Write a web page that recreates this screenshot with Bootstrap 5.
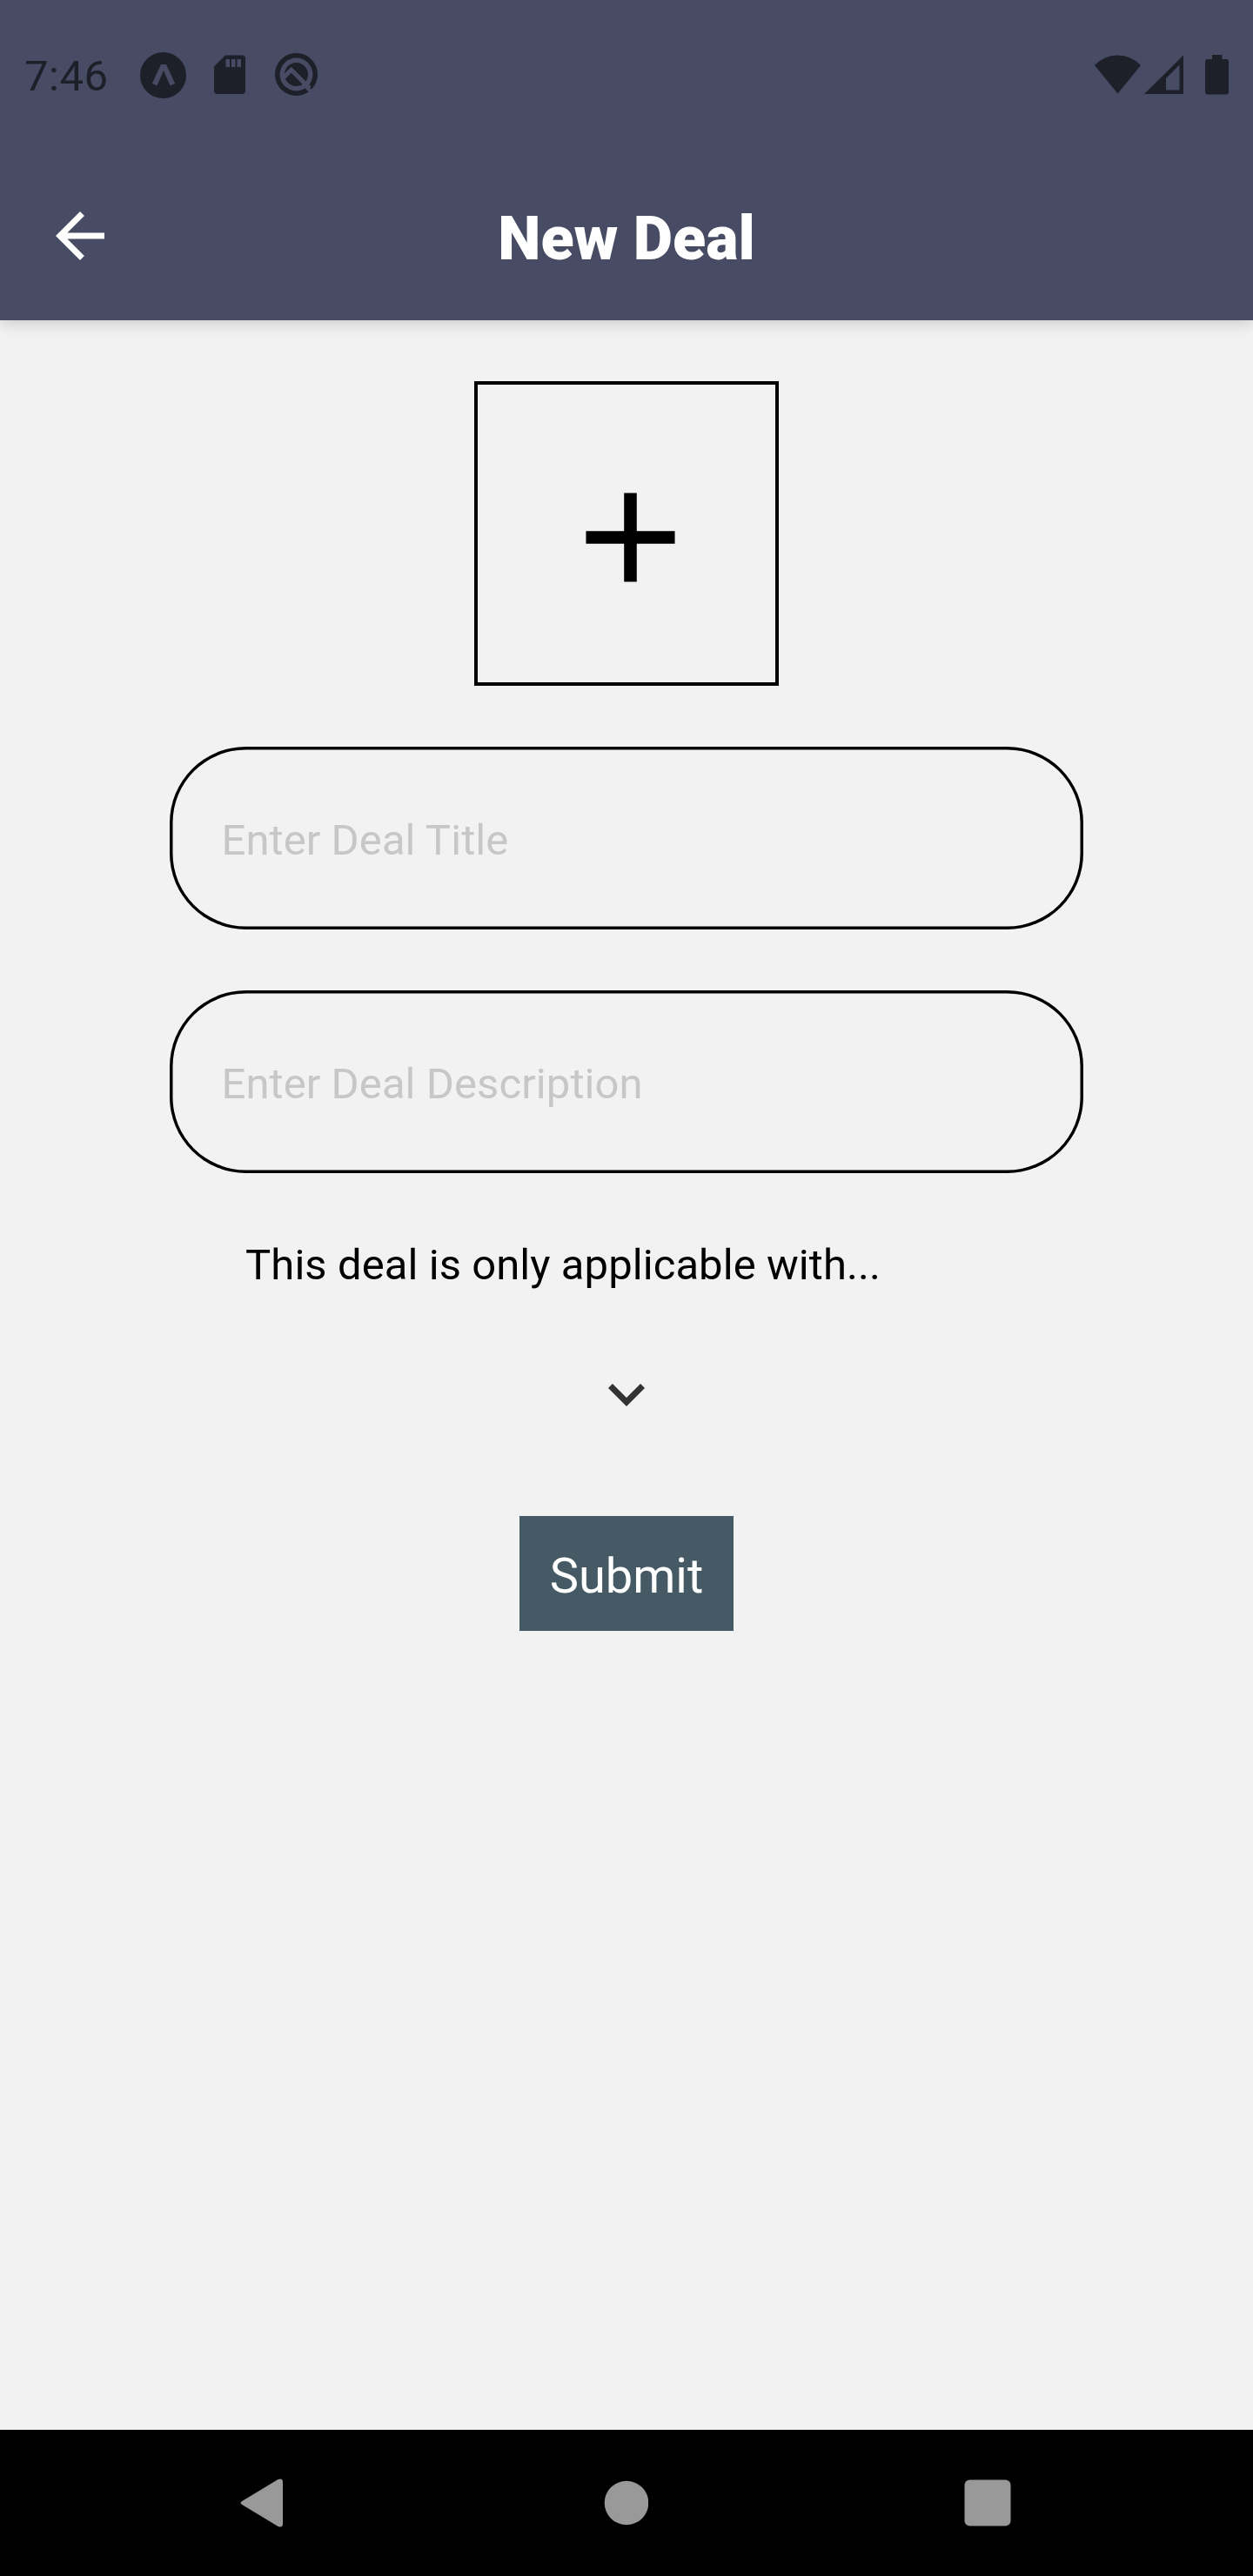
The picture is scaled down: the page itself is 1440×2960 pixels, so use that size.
<!DOCTYPE html>
<html lang="en">
<head>
<meta charset="utf-8">
<meta name="viewport" content="width=device-width, initial-scale=1">
<title>New Deal</title>
<link href="https://cdn.jsdelivr.net/npm/bootstrap@5.3.0/dist/css/bootstrap.min.css" rel="stylesheet">
<style>
body{font-family:Roboto,"Liberation Sans",sans-serif;background:#f2f2f2;color:#000}
svg{display:block;flex:none}
.screen{height:2960px;width:1440px}
.top{background:#474b64;height:368px;box-shadow:0 4px 16px rgba(0,0,0,.16);flex:none}
.status{height:172px;padding:0 28px;color:#1d1f29}
.clock{font-size:49px;line-height:58px;width:133px;letter-spacing:.5px;padding-top:3px}
.sd{margin-left:32px}
.assist{margin-left:34px}
.signal{margin-left:4px}
.battery{margin-left:25px}
.toolbar{height:196px;display:grid;grid-template-columns:1fr auto 1fr;align-items:center;padding:2px 50px 0}
.heading{font-size:70px;line-height:82px;font-weight:900;padding-top:5px}
.form-area{padding-top:70px}
.photo{width:350px;height:350px;border:4px solid #000;border-radius:0;padding:8px 0 0 9px}
.pill,.pill:focus{width:1050px;height:210px;margin-top:70px;border:0;border-radius:87.5px;box-shadow:inset 0 0 0 3.5px #000;background:transparent;font-size:49px;line-height:58px;letter-spacing:.07px;padding:5px 59.5px 0}
.pill::placeholder{color:#c7c7c7;opacity:1}
.hint{font-size:49px;line-height:58px;letter-spacing:.07px;margin:77px 0 0 -146px}
.expand{margin-top:77px}
.send{background:#455a64;color:#fff;font-size:56px;line-height:66px;width:246px;height:132px;margin-top:98px;padding:6px 0 0;border-radius:0;border:0}
.navkeys{height:168px;background:#000;flex:none;padding:0 278px 0 276px}
</style>
<script src="https://cdn.jsdelivr.net/npm/bootstrap@5.3.0/dist/js/bootstrap.bundle.min.js"></script>
</head>
<body>
<div class="screen d-flex flex-column">
  <header class="top">
    <div class="status d-flex align-items-center">
      <span class="clock">7:46</span>
      <svg width="53" height="53" viewBox="0 0 53 53"><circle cx="26.5" cy="26.5" r="26.5" fill="#1d1f29"/><path d="M24 14h6l10.200 22-5.700 2.500L27 21l-7.500 17.500L13.800 36z" fill="#474b64"/></svg>
      <svg class="sd" width="36" height="46" viewBox="0 0 36 46"><path d="M13 .500H32a4 4 0 0 1 4 4V41a4 4 0 0 1-4 4H4a4 4 0 0 1-4-4V13.500z" fill="#1d1f29"/><path d="M13.500 5H18v9h-4.500zM20 5h4.500v9H20zM26.500 5H31v9h-4.500z" fill="#474b64"/></svg>
      <svg class="assist" width="50" height="50" viewBox="0 0 50 50"><circle cx="24.500" cy="24.500" r="21.700" fill="none" stroke="#1d1f29" stroke-width="5.600"/><circle cx="24.500" cy="24.500" r="13.500" fill="#1d1f29"/><path d="M8.500 29.500 18.700 19.300 40 40.500" fill="none" stroke="#474b64" stroke-width="5"/><path d="M32 35 47 50" stroke="#474b64" stroke-width="4"/></svg>
      <div class="d-flex ms-auto">
        <svg width="53" height="46" viewBox="0 0 53 46"><path d="M0 12Q11 .500 26.500 .500T53 12L26.500 44.500z" fill="#1d1f29"/></svg>
        <svg class="signal" width="45" height="46" viewBox="0 0 45 46"><path fill-rule="evenodd" d="M45 .500V45H0zM40.500 11.500 25 27V40.500H40.500z" fill="#1d1f29"/></svg>
        <svg class="battery" width="27" height="46" viewBox="0 0 27 46"><path d="M8 0H19.500V5H24a3 3 0 0 1 3 3V42.500a3 3 0 0 1-3 3H3a3 3 0 0 1-3-3V8a3 3 0 0 1 3-3H8z" fill="#1d1f29"/></svg>
      </div>
    </div>
    <nav class="toolbar text-white">
      <svg width="84" height="84" viewBox="0 0 24 24"><path d="M20 11H7.830l5.590-5.590L12 4l-8 8 8 8 1.410-1.410L7.830 13H20z" fill="#fff"/></svg>
      <h1 class="heading m-0">New Deal</h1>
      <span></span>
    </nav>
  </header>
  <main class="form-area flex-grow-1 d-flex flex-column align-items-center">
    <button class="photo btn d-flex align-items-center justify-content-center" aria-label="Add photo">
      <svg width="175" height="175" viewBox="0 0 24 24"><path d="M19 13h-6v6h-2v-6H5v-2h6V5h2v6h6z" fill="#000"/></svg>
    </button>
    <input class="pill form-control" placeholder="Enter Deal Title">
    <input class="pill form-control" placeholder="Enter Deal Description">
    <div class="hint">This deal is only applicable with...</div>
    <svg class="expand" width="84" height="84" viewBox="0 0 24 24"><path d="M7.410 8.590 12 13.170l4.590-4.580L18 10l-6 6-6-6z" fill="#333"/></svg>
    <button class="send btn">Submit</button>
  </main>
  <footer class="navkeys d-flex align-items-center justify-content-between">
    <svg width="54" height="58" viewBox="0 0 54 58"><path d="M3 26.500 43.500 2Q49 0 49 5V53Q49 58 43.500 56L3 31.500Q-2 29 3 26.500z" fill="#999"/></svg>
    <svg width="52" height="52" viewBox="0 0 52 52"><circle cx="27" cy="26" r="25.300" fill="#999"/></svg>
    <svg width="54" height="54" viewBox="0 0 54 54"><rect x=".5" y=".5" width="53" height="53" rx="6" fill="#999"/></svg>
  </footer>
</div>
</body>
</html>
